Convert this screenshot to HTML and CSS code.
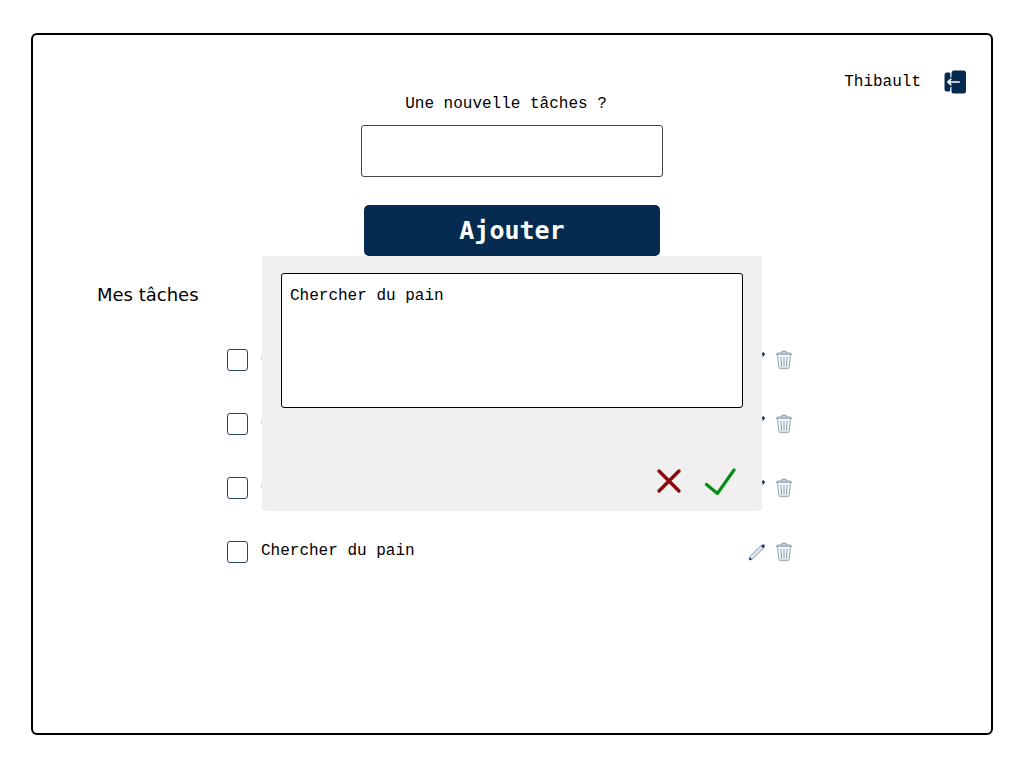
FILE: index.html
```html
<!DOCTYPE html>
<html lang="fr">
<head>
<meta charset="utf-8">
<meta name="viewport" content="width=device-width, initial-scale=1">
<title>Mes tâches</title>
<link rel="stylesheet" href="styles.css">
</head>
<body>
<svg class="sprite" aria-hidden="true">
  <symbol id="pencil" viewBox="0 0 18 18">
    <path d="M2.3 13.2 12.8 3 15.2 5.4 4.800 15.800 1.400 17z" fill="#f4f8fb" stroke="#5f7a94" stroke-width=".9"/>
    <path d="M4 14.200 14 4.600" stroke="#b4c1cd" stroke-width=".8"/>
    <path d="M13 2.500c1.200-1.200 2.600-1.200 3.400-.5s.6 2-.7 3.200z" fill="#173d63"/>
    <path d="M1.800 14 4 16.200 1 17.200z" fill="#173d63"/>
  </symbol>
  <symbol id="trash" viewBox="0 0 18 20">
    <path d="M6.500 3V2Q6.500 1.300 7.200 1.300h3.600q.7 0 .7.7v1" fill="none" stroke="#8497a9"/>
    <path d="M1.500 4.800V4Q1.500 3 2.800 3h12.400q1.300 0 1.300 1v.8z" fill="#dde5eb" stroke="#7389a0" stroke-width=".8"/>
    <path d="M2.700 5.200 4 17.500Q4.100 18.700 5.500 18.700h7q1.400 0 1.500-1.200l1.300-12.300" fill="#f8fafc" stroke="#879aac" stroke-width=".9"/>
    <path d="M6 7 6.500 16.500M9 7v9.500M12 7l-.5 9.500" stroke="#8497a9"/>
    <path d="M4.600 17.600h8.800" stroke="#c3ced7" stroke-width=".8"/>
  </symbol>
</svg>
<main class="frame">
  <header class="top">
    <form class="add">
      <label class="add-label" for="new-task">Une nouvelle tâches ?</label>
      <input class="add-input" id="new-task" type="text">
      <button class="add-button" type="button">Ajouter</button>
    </form>
    <div class="user">
      <span>Thibault</span>
      <button class="icon-button" type="button" aria-label="Se déconnecter">
        <svg width="22" height="24" viewBox="0 0 22 24">
          <path d="M2.500 2.500H5q1.300 0 1.300 1.400V6q0 1.500 1.200 1.500V3Q7.500.5 10 .5h9.500Q22 .5 22 3v18q0 2.500-2.500 2.500H10Q7.500 23.500 7.500 21v-4.500q-1.200 0-1.200 1.500v2.100Q6.300 21.500 5 21.500H2.500Q.5 21.500.5 19V5Q.5 2.500 2.500 2.500z" fill="#052c50"/>
          <path d="M15.800 12H4M7.300 8.800 4 12l3.300 3.200" fill="none" stroke="#fff" stroke-width="1.700"/>
        </svg>
      </button>
    </div>
  </header>
  <h1 class="title">Mes tâches</h1>
  <ul class="tasks">
    <li class="task"><input class="check" type="checkbox" id="t1"><label class="task-label" for="t1">Chercher du pain</label><button class="icon-button" type="button" aria-label="Modifier"><svg width="18" height="18"><use href="#pencil"/></svg></button><button class="icon-button" type="button" aria-label="Supprimer"><svg width="18" height="20"><use href="#trash"/></svg></button></li>
    <li class="task"><input class="check" type="checkbox" id="t2"><label class="task-label" for="t2">Chercher du pain</label><button class="icon-button" type="button" aria-label="Modifier"><svg width="18" height="18"><use href="#pencil"/></svg></button><button class="icon-button" type="button" aria-label="Supprimer"><svg width="18" height="20"><use href="#trash"/></svg></button></li>
    <li class="task"><input class="check" type="checkbox" id="t3"><label class="task-label" for="t3">Chercher du pain</label><button class="icon-button" type="button" aria-label="Modifier"><svg width="18" height="18"><use href="#pencil"/></svg></button><button class="icon-button" type="button" aria-label="Supprimer"><svg width="18" height="20"><use href="#trash"/></svg></button></li>
    <li class="task"><input class="check" type="checkbox" id="t4"><label class="task-label" for="t4">Chercher du pain</label><button class="icon-button" type="button" aria-label="Modifier"><svg width="18" height="18"><use href="#pencil"/></svg></button><button class="icon-button" type="button" aria-label="Supprimer"><svg width="18" height="20"><use href="#trash"/></svg></button></li>
  </ul>
</main>
<section class="modal" role="dialog" aria-label="Modifier la tâche">
  <textarea class="edit" aria-label="Tâche">Chercher du pain</textarea>
  <div class="actions">
    <button class="icon-button" type="button" aria-label="Annuler"><svg width="26" height="28" viewBox="0 0 26 28"><path d="M3 4 23 24M23 4 3 24" stroke="#8b080c" stroke-width="3.400" stroke-linecap="round"/></svg></button>
    <button class="icon-button" type="button" aria-label="Valider"><svg width="32" height="28" viewBox="0 0 32 28"><path d="M2.500 17.500 13.500 26.400 30 3" fill="none" stroke="#078c14" stroke-width="3.200" stroke-linecap="round" stroke-linejoin="round"/></svg></button>
  </div>
</section>
</body>
</html>
```
FILE: styles.css
```css
* {
  box-sizing: border-box;
}

body {
  display: flex;
  position: relative;
  min-height: 100vh;
  margin: 0;
  padding: 33px 31px;
  background: #fff;
  color: #000;
  font: 16px/20px "Liberation Mono", monospace;
}

.sprite {
  position: absolute;
  width: 0;
  height: 0;
}

.frame {
  flex: 1;
  padding: 32px 25px;
  border: 2px solid #000;
  border-radius: 6px;
}

.top {
  display: grid;
  grid-template-columns: 1fr auto 1fr;
  align-items: start;
}

.add {
  display: flex;
  grid-column: 2;
  flex-direction: column;
  align-items: center;
  padding-top: 27px;
}

.add-label {
  padding-right: 12px;
}

.add-input {
  width: 302px;
  height: 52px;
  margin: 11px 0 28px;
  padding: 0 8px;
  border: 1px solid #444;
  border-radius: 3px;
  font: inherit;
}

.add-button {
  width: 296px;
  height: 51px;
  padding: 0;
  border: 0;
  border-radius: 5px;
  background: #052c50;
  color: #fff;
  font: bold 25px/30px "DejaVu Sans Mono", monospace;
}

.user {
  display: flex;
  align-items: center;
  justify-content: flex-end;
  gap: 23px;
  padding-top: 3px;
}

.icon-button {
  display: flex;
  padding: 0;
  border: 0;
  background: none;
}

.title {
  margin: 27px 0 0;
  padding-left: 39px;
  font: 18px/24px "DejaVu Sans", sans-serif;
}

.tasks {
  display: flex;
  flex-direction: column;
  gap: 40px;
  width: 100%;
  max-width: 570px;
  margin: 41px auto 0;
  padding: 0;
  list-style: none;
}

.task {
  display: flex;
  align-items: center;
  gap: 9px;
  height: 24px;
  padding-right: 4px;
}

.check {
  appearance: none;
  width: 21px;
  height: 22px;
  margin: 0 4px 0 0;
  border: 1px solid #264866;
  border-radius: 3px;
}

.task-label {
  flex: 1;
  padding-bottom: 3px;
}

.modal {
  position: absolute;
  top: 256px;
  left: calc(50% - 250px);
  width: 500px;
  padding: 17px 19px 16px;
  border-radius: 3px;
  background: #f0f0f0;
}

.edit {
  display: block;
  width: 100%;
  height: 135px;
  padding: 12px 8px;
  border: 1px solid #000;
  border-radius: 3px;
  background: #fff;
  font: inherit;
  resize: none;
}

.actions {
  display: flex;
  justify-content: flex-end;
  gap: 22px;
  padding: 59px 7px 0;
}
```
